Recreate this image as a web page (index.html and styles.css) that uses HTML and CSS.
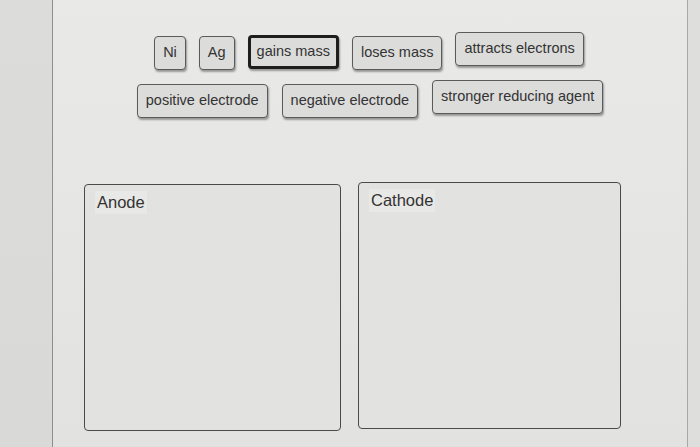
FILE: index.html
```html
<!DOCTYPE html>
<html>
<head>
<meta charset="utf-8">
<link rel="stylesheet" href="styles.css">
</head>
<body>
<div class="page">
  <div class="side-left"></div>
  <main class="panel">
    <div class="bank">
      <div class="row row-1">
        <span class="chip">Ni</span>
        <span class="chip">Ag</span>
        <span class="chip chip-selected">gains mass</span>
        <span class="chip">loses mass</span>
        <span class="chip chip-up">attracts electrons</span>
      </div>
      <div class="row row-2">
        <span class="chip">positive electrode</span>
        <span class="chip">negative electrode</span>
        <span class="chip chip-up">stronger reducing agent</span>
      </div>
    </div>
    <div class="zones">
      <section class="zone zone-anode"><span class="zone-label">Anode</span></section>
      <section class="zone zone-cathode"><span class="zone-label">Cathode</span></section>
    </div>
  </main>
  <div class="side-right"></div>
</div>
</body>
</html>
```
FILE: styles.css
```css
html, body {
  margin: 0;
  padding: 0;
  height: 100%;
}
body {
  background: #e4e4e2;
  font-family: "Liberation Sans", Arial, sans-serif;
  color: #2f2f2f;
}
.page {
  display: flex;
  width: 700px;
  height: 447px;
  overflow: hidden;
}
.side-left {
  width: 52px;
  flex: none;
  background: linear-gradient(180deg, #dcdcda, #d9d9d7);
  border-right: 1px solid #8e8e8c;
}
.side-right {
  width: 12px;
  flex: none;
  background: #dededc;
  border-left: 1px solid #a8a8a6;
}
.panel {
  flex: 1;
  background: linear-gradient(180deg, #e9e9e7 0%, #e5e5e3 60%, #e2e2e0 100%);
  display: flex;
  flex-direction: column;
}
.bank {
  padding-top: 36px;
  display: flex;
  flex-direction: column;
  gap: 14px;
}
.row {
  display: flex;
  justify-content: center;
  align-items: flex-start;
  gap: 13px;
}
.row-1 { padding-right: 2px; }
.row-2 { gap: 14px; }
.chip {
  display: inline-block;
  box-sizing: border-box;
  height: 34px;
  line-height: 30px;
  padding: 0 8px;
  font-size: 14.5px;
  color: #333;
  background: #dcdcdb;
  border: 1.5px solid #5a5a5a;
  border-radius: 4px;
  box-shadow: 1px 2px 2px rgba(0,0,0,0.35);
  white-space: nowrap;
}
.chip-selected {
  border: 3px solid #1e1e1e;
  line-height: 27px;
  padding: 0 6px;
  margin-top: -1px;
}
.chip-up {
  margin-top: -4px;
}
.zones {
  display: flex;
  gap: 17px;
  padding-left: 31px;
  margin-top: 66px;
}
.zone {
  box-sizing: border-box;
  height: 247px;
  background: #e2e2e0;
  border: 1.5px solid #4a4a4a;
  border-radius: 4px;
  padding: 6px 10px;
}
.zone-anode { width: 257px; }
.zone-cathode { width: 263px; margin-top: -2px; }
.zone-label {
  display: inline-block;
  font-size: 16.5px;
  color: #333;
  background: #e8e8e6;
  padding: 2px 2px;
}
```
